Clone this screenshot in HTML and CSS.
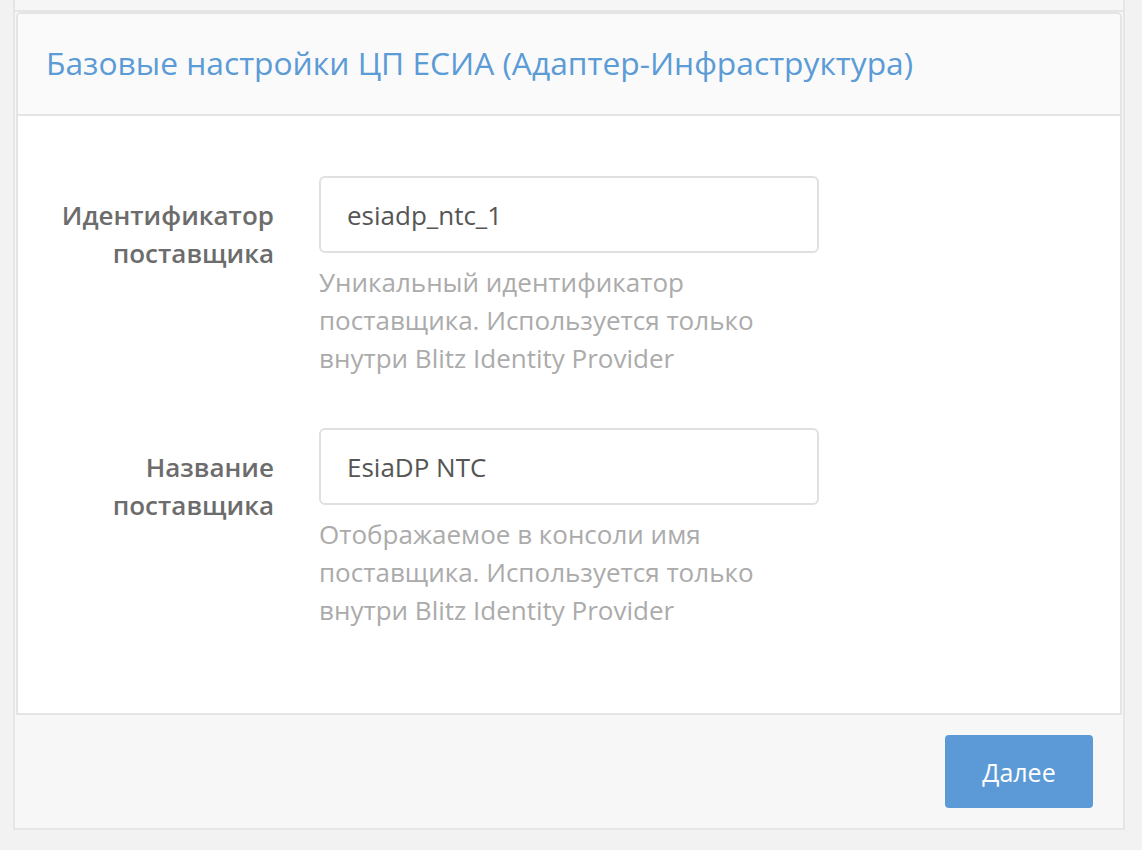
FILE: index.html
```html
<!DOCTYPE html>
<html lang="ru">
<head>
<meta charset="utf-8">
<title>Базовые настройки ЦП ЕСИА</title>
<link rel="stylesheet" href="styles.css">
</head>
<body>
<div class="prev-card"></div>
<div class="wizard">
  <div class="panel">
    <div class="panel-header">
      <h2 class="panel-title">Базовые настройки ЦП ЕСИА (Адаптер-Инфраструктура)</h2>
    </div>
    <div class="panel-body">
      <div class="form-row">
        <label class="form-label" for="pid">Идентификатор поставщика</label>
        <div class="form-field">
          <input class="form-input" id="pid" type="text" value="esiadp_ntc_1">
          <p class="form-help">Уникальный идентификатор поставщика. Используется только внутри Blitz Identity Provider</p>
        </div>
      </div>
      <div class="form-row">
        <label class="form-label" for="pname">Название поставщика</label>
        <div class="form-field">
          <input class="form-input" id="pname" type="text" value="EsiaDP NTC">
          <p class="form-help">Отображаемое в консоли имя поставщика. Используется только внутри Blitz Identity Provider</p>
        </div>
      </div>
    </div>
  </div>
  <div class="wizard-footer">
    <button class="btn-primary" type="button">Далее</button>
  </div>
</div>
</body>
</html>
```

FILE: styles.css
```css
* { box-sizing: border-box; }

html, body {
  margin: 0;
  padding: 0;
  background: #f2f2f2;
  font-family: "Open Sans", "Noto Sans", "Liberation Sans", sans-serif;
}

.prev-card {
  margin-left: 13px;
  width: 1112px;
  height: 10px;
  background: #f6f6f6;
  border-left: 2px solid #e6e6e6;
  border-right: 2px solid #e6e6e6;
}

.wizard {
  margin-left: 13px;
  width: 1112px;
  border: 2px solid #e6e6e6;
  background: #f7f7f7;
}

.panel {
  margin: 0 1px;
  background: #fff;
  border: 2px solid #e4e4e4;
  border-radius: 5px 5px 0 0;
}

.panel-header {
  height: 102px;
  background: #fafafa;
  border-bottom: 2px solid #e4e4e4;
  border-radius: 4px 4px 0 0;
  display: flex;
  align-items: center;
  padding: 0 28px 4px;
}

.panel-title {
  margin: 0;
  font-size: 31.75px;
  font-weight: 400;
  color: #5b9bd6;
}

.panel-body {
  padding: 60px 0 31px;
}

.form-row {
  display: grid;
  grid-template-columns: 256px 500px;
  column-gap: 45px;
  margin-bottom: 51px;
}

.form-row:last-child { margin-bottom: 53px; }

.form-label {
  padding-top: 20px;
  text-align: right;
  font-size: 26px;
  line-height: 38px;
  font-weight: 600;
  color: #6c6c6c;
}

.form-input {
  display: block;
  width: 500px;
  height: 77px;
  margin: 0;
  padding: 0 26px;
  border: 2px solid #e0e0e0;
  border-radius: 6px;
  background: #fff;
  font-family: inherit;
  font-size: 26px;
  color: #555;
  outline: none;
}

.form-help {
  margin: 10px 0 0;
  font-size: 26px;
  line-height: 38px;
  color: #ababab;
}

.wizard-footer {
  display: flex;
  justify-content: flex-end;
  padding: 20px 30px 20px;
}

.btn-primary {
  width: 148px;
  height: 73px;
  border: 0;
  border-radius: 4px;
  background: #5b9ad6;
  color: #fff;
  font-family: inherit;
  font-size: 25px;
  cursor: pointer;
}
```
